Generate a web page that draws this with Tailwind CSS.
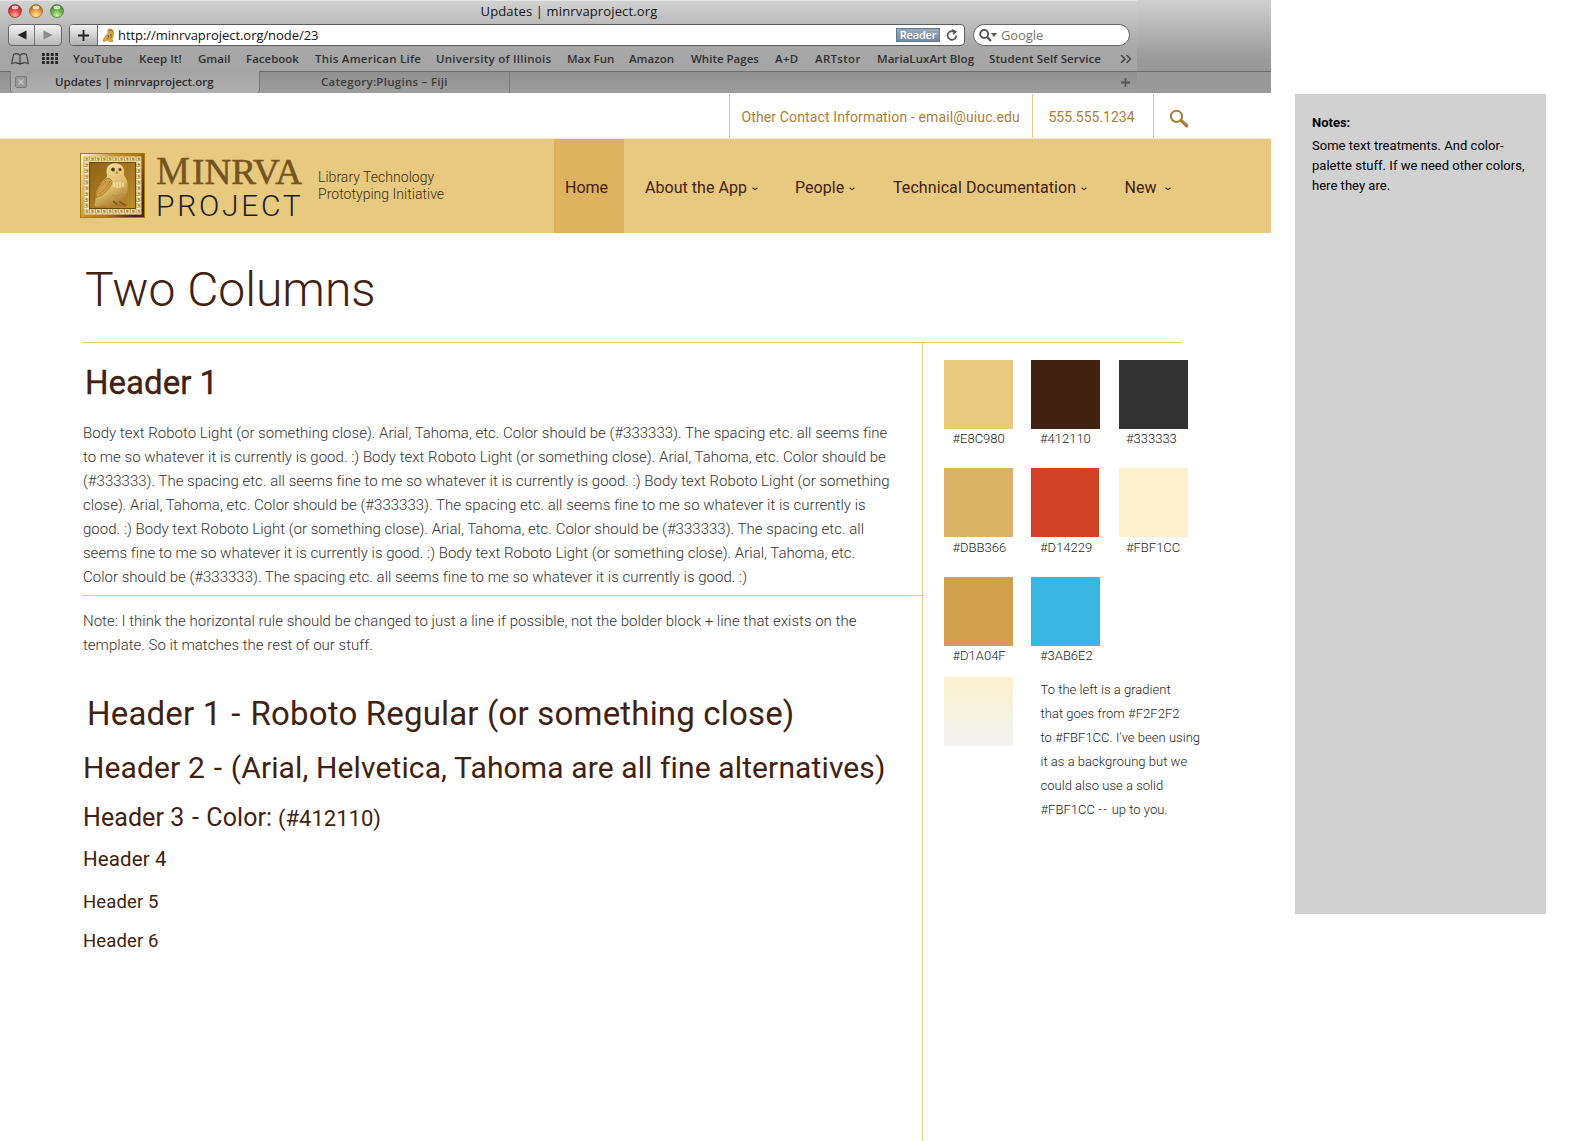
<!DOCTYPE html>
<html lang="en">
<head>
<meta charset="utf-8">
<title>Updates | minrvaproject.org</title>
<script src="https://cdn.jsdelivr.net/npm/@tailwindcss/browser@4"></script>
</head>
<body class="bg-white font-['Roboto',sans-serif]">
<div class="flex h-[1141px] w-[1569px] items-start overflow-hidden">
<div class="flex h-[1141px] w-[1271px] flex-col">

<!-- Browser chrome -->
<header class="flex h-[93px] bg-linear-to-b from-[#d0d0d0] via-[#999] via-65% to-[#999] font-['Open_Sans',sans-serif] text-[#2c2c2c]">
<div class="flex w-[1137px] flex-col bg-linear-to-b from-[#d2d2d2] via-[#a8a8a8] via-50% to-[#a2a2a2]">
  <div class="relative h-6 border-t border-[#e6e6e6] pl-px text-center text-[13px]/[21px] tracking-[0.14px] text-[#151515]">
    <div class="absolute top-[3px] left-2 flex gap-[7px]">
      <svg class="size-3.5" viewBox="0 0 14 14"><defs><radialGradient id="r" cx=".5" cy=".85" r=".8"><stop offset="0" stop-color="#ffb5b0"/><stop offset=".5" stop-color="#e84b4b"/><stop offset="1" stop-color="#a51d22"/></radialGradient></defs><circle cx="7" cy="7" r="6.5" fill="url(#r)" stroke="#8f3032" stroke-width=".7"/><ellipse cx="7" cy="3.4" rx="3.3" ry="1.9" fill="#fff" opacity=".75"/></svg>
      <svg class="size-3.5" viewBox="0 0 14 14"><defs><radialGradient id="y" cx=".5" cy=".85" r=".8"><stop offset="0" stop-color="#ffe9a4"/><stop offset=".5" stop-color="#eda043"/><stop offset="1" stop-color="#a8601a"/></radialGradient></defs><circle cx="7" cy="7" r="6.5" fill="url(#y)" stroke="#98622c" stroke-width=".7"/><ellipse cx="7" cy="3.4" rx="3.3" ry="1.9" fill="#fff" opacity=".75"/></svg>
      <svg class="size-3.5" viewBox="0 0 14 14"><defs><radialGradient id="g" cx=".5" cy=".85" r=".8"><stop offset="0" stop-color="#cdf5a4"/><stop offset=".5" stop-color="#72b750"/><stop offset="1" stop-color="#3b7a28"/></radialGradient></defs><circle cx="7" cy="7" r="6.5" fill="url(#g)" stroke="#48763a" stroke-width=".7"/><ellipse cx="7" cy="3.4" rx="3.3" ry="1.9" fill="#fff" opacity=".75"/></svg>
    </div>
    Updates | minrvaproject.org
  </div>
  <div class="flex h-[22px] pl-2">
    <div class="flex h-[22px] w-[54px] rounded border border-[#666] bg-linear-to-b from-[#f4f4f4] to-[#b8b8b8]">
      <div class="flex w-[26px] items-center justify-center border-r border-[#777]"><svg class="h-2.5 w-2.5" viewBox="0 0 10 10"><path d="M9.500 .5v9L.5 5z" fill="#222"/></svg></div>
      <div class="flex flex-1 items-center justify-center"><svg class="h-2.5 w-2.5" viewBox="0 0 10 10"><path d="M.5 .5v9L9.500 5z" fill="#8a8a8a"/></svg></div>
    </div>
    <div class="ml-[7px] flex h-[22px] w-[896px] overflow-hidden rounded border border-[#5c5c5c] bg-white">
      <div class="flex w-7 items-center justify-center border-r border-[#666] bg-linear-to-b from-[#f4f4f4] to-[#b0b0b0]"><svg class="size-[11px]" viewBox="0 0 11 11"><path d="M5.500 0v11M0 5.500h11" stroke="#222" stroke-width="1.800"/></svg></div>
      <svg class="mt-[3px] ml-1 h-[15px] w-[13px]" viewBox="0 0 13 15"><path d="M6.500.5C9 0 12 1.200 12 4c0 3 0 5-1.500 7l1 3H7l-1-1.500-4 1.500-1.500-1C1 9.500 3.500 7.500 5.500 5.500 5 3 5.200 1.200 6.500.5z" fill="#d3a344"/><path d="M7 2.500c1-1 3-.5 3.500 1M6 7c1 2 .5 3-1 4M9 6v4" stroke="#7d5418" fill="none"/></svg>
      <span class="ml-[3px] text-[13px]/[20px] tracking-[-0.05px] text-[#111]">http://minrvaproject.org/node/23</span>
      <span class="mt-[3px] ml-auto flex h-3.5 w-11 items-center justify-center border border-[#647688] bg-linear-to-b from-[#9aabbd] to-[#7488a0] text-[11px]/[12px] font-semibold tracking-[-0.2px] text-white">Reader</span>
      <svg class="mt-1 mr-[6px] ml-[6px] size-3" viewBox="0 0 12 12"><path d="M10.200 6.500A4.300 4.300 0 1 1 6 2.200h1.500" fill="none" stroke="#555" stroke-width="1.700"/><path d="M6 0l5 2.300L7.500 6z" fill="#555"/></svg>
    </div>
    <div class="ml-2 flex h-[22px] w-[157px] items-center rounded-full border border-[#666] bg-white pl-[5px] text-[13px]/[20px] text-[#777]">
      <svg class="h-[13px] w-[18px]" viewBox="0 0 18 13"><circle cx="5.200" cy="5" r="4" fill="none" stroke="#555" stroke-width="1.900"/><path d="M8 8l4 4" stroke="#555" stroke-width="2.300"/><path d="M12 4h6l-3 4z" fill="#555"/></svg>
      <span class="ml-1 tracking-[-0.1px]">Google</span>
    </div>
  </div>
  <nav class="flex h-[25px] text-[11.5px]/[25px] font-semibold whitespace-nowrap text-[#303030]">
    <svg class="mt-[7px] ml-[11px] h-3 w-[18px]" viewBox="0 0 18 12"><path d="M9 2.500C7.500.5 4.500.5 2.500 1.500L.7 10.500c2.300-1 6.300-1 8.300.7 2-1.700 6-1.700 8.300-.7l-1.800-9C13.500.5 10.500.5 9 2.500zM9 2.500v8.500" fill="none" stroke="#3a3a3a" stroke-width="1.100"/></svg>
    <svg class="mt-[7px] ml-[13px] h-[11px] w-4" viewBox="0 0 16 11"><path d="M0 1.500h16M0 5.500h16M0 9.500h16" stroke="#262626" stroke-width="3" stroke-dasharray="2.800 1.600"/></svg>
    <span class="ml-[15px] w-[66px] tracking-[0.15px]">YouTube</span>
    <span class="w-[59px] tracking-[0.1px]">Keep It!</span>
    <span class="w-12">Gmail</span>
    <span class="w-[69px]">Facebook</span>
    <span class="w-[121px] tracking-[0.24px]">This American Life</span>
    <span class="w-[131px] tracking-[0.26px]">University of Illinois</span>
    <span class="w-[62px]">Max Fun</span>
    <span class="w-[62px]">Amazon</span>
    <span class="w-[84px]">White Pages</span>
    <span class="w-10 tracking-[0.3px]">A+D</span>
    <span class="w-[62px] tracking-[0.3px]">ARTstor</span>
    <span class="w-28 tracking-[0.05px]">MariaLuxArt Blog</span>
    <span class="w-[131px] tracking-[0.12px]">Student Self Service</span>
    <svg class="mt-[9px] h-2 w-3" viewBox="0 0 12 8"><path d="M1 0l4 4-4 4M6.500 0l4 4-4 4" fill="none" stroke="#444" stroke-width="1.500"/></svg>
  </nav>
  <div class="flex h-[22px] bg-linear-to-b from-[#909090] to-[#9d9d9d] text-[11.5px]/[21px] font-semibold whitespace-nowrap shadow-[inset_0_1px_0_#6b6b6b]">
    <div class="ml-2.5 flex h-[22px] w-[250px] items-start rounded-b border-r border-l border-[#777] bg-linear-to-b from-[#a4a4a4] to-[#b0b0b0]">
      <svg class="mt-[5px] ml-1 size-3" viewBox="0 0 12 12"><rect x=".5" y=".5" width="11" height="11" rx="1.500" fill="#999" stroke="#7a7a7a"/><path d="M3.500 3.500l5 5m0-5l-5 5" stroke="#c9c9c9" stroke-width="1.300"/></svg>
      <span class="ml-7">Updates | minrvaproject.org</span>
    </div>
    <div class="flex h-[22px] w-[250px] border-r border-[#7c7c7c] pl-[61px] tracking-[0.28px] text-[#3b3b3b]">Category:Plugins – Fiji</div>
    <svg class="mt-[7px] mr-[7px] ml-auto size-[9px]" viewBox="0 0 9 9"><path d="M4.500 0v9M0 4.500h9" stroke="#555" stroke-width="1.800"/></svg>
  </div>
</div>
<div class="mt-[71px] h-px flex-1 bg-[#6b6b6b]"></div>
</header>

<!-- Contact strip -->
<div class="mt-px flex h-[45px] justify-end border-b border-[#f5e8dc] text-[14px]/[46px] whitespace-nowrap text-[#a97f37]">
  <div class="w-[303px] border-l border-[#e8c980] pl-[11.5px] tracking-[0.125px]">Other Contact Information - email@uiuc.edu</div>
  <div class="w-[121px] border-l border-[#e8c980] pl-[15.5px]">555.555.1234</div>
  <div class="w-[118px] border-l border-[#e8c980] pt-[15px] pl-4"><svg class="size-[19px]" viewBox="0 0 19 19"><circle cx="6.500" cy="7.300" r="5.600" fill="none" stroke="#a97f37" stroke-width="2"/><path d="M11.300 11.600l5.400 5.200" stroke="#a97f37" stroke-width="3.400" stroke-linecap="round"/></svg></div>
</div>

<!-- Masthead -->
<div class="flex h-[94px] bg-[#e8c980]">
  <svg class="mt-3.5 ml-20 size-[65px]" viewBox="0 0 65 65">
    <defs>
      <linearGradient id="fr" x1="0" y1=".1" x2="1" y2=".6"><stop offset="0" stop-color="#fff3cf"/><stop offset=".4" stop-color="#c4902a"/><stop offset=".7" stop-color="#a87417"/><stop offset="1" stop-color="#4a2800"/></linearGradient>
      <linearGradient id="bg" x1="0" y1="0" x2="1" y2="1"><stop offset="0" stop-color="#8f6413"/><stop offset="1" stop-color="#bd8d29"/></linearGradient>
      <linearGradient id="ow" x1=".3" y1="0" x2=".7" y2="1"><stop offset="0" stop-color="#f3dea0"/><stop offset=".55" stop-color="#e0bd6c"/><stop offset="1" stop-color="#a3732a"/></linearGradient>
      <pattern id="key" x="3.500" y="3.500" width="5.800" height="5.800" patternUnits="userSpaceOnUse"><path d="M0 5.200h5V.7H1.300v2.700h1.800" fill="none" stroke="#fff6da" stroke-width="1.100"/></pattern>
    </defs>
    <rect x=".5" y=".5" width="64" height="64" fill="url(#fr)" stroke="#a8780f"/>
    <rect x="6.400" y="6.400" width="52.200" height="52.200" fill="none" stroke="#ab7a1c" stroke-width="5.800"/>
    <rect x="6.400" y="6.400" width="52.200" height="52.200" fill="none" stroke="url(#key)" stroke-width="5.800"/>
    <rect x="9.500" y="9.500" width="46" height="46" fill="url(#bg)" stroke="#6d460a"/>
    <path d="M27 15c2-5 9-6 14-3 4 3 3 7 3 10 4 6 5 13 2 20-1 3-3 5-4 7l5 2-1 3-8-1-6 1c-4 1-6-2-10-1-3 1-8 1-8-1 2-3 1-4 2-8 0-8 4-14 11-20 0-3-1-6 0-9z" fill="url(#ow)"/>
    <path d="M26.500 25.500c-6 4-9 10-10.500 19 7-2 14-8 16-15 0-2-2-5-5.500-4z" fill="#cfa04b" stroke="#9c6c20" stroke-width=".7"/>
    <path d="M19 41c5-3 9-8 11-13M22 33l4-5" stroke="#a3742a" stroke-width=".7" fill="none"/>
    <path d="M34 29v5m3-5v6m3-6v6m3-5v4" stroke="#fbeab5" stroke-width="1.200"/>
    <path d="M32 42c3 2 7 1 10-2" stroke="#b58536" stroke-width=".8" fill="none"/>
    <circle cx="33" cy="16.500" r="1.900" fill="#5c390b"/><circle cx="40" cy="16.500" r="1.500" fill="#5c390b"/>
    <path d="M37 17l-1 3.500h1.800z" fill="#99691f"/>
    <path d="M33 48l4 3.500m2-3l6 3.500" stroke="#7a4e12" stroke-width="1.300"/>
  </svg>
  <div class="ml-3 w-[150px] pt-3.5">
    <div class="-ml-px flex h-8 font-['Liberation_Serif',serif] text-[#745420]">
      <svg class="h-8 w-9 overflow-visible" viewBox="0 0 36 32"><text x="0" y="31" textLength="34" lengthAdjust="spacingAndGlyphs" fill="currentColor" stroke="currentColor" stroke-width=".3" font-size="41">M</text></svg>
      <svg class="h-8 w-[110px] overflow-visible" viewBox="0 0 110 32"><text x="0" y="31" textLength="110" lengthAdjust="spacingAndGlyphs" fill="currentColor" stroke="currentColor" stroke-width=".5" font-size="35">INRVA</text></svg>
    </div>
    <div class="-ml-px mt-[2px] text-[30px]/[37px] font-light tracking-[2.7px] text-[#1c1c1c]">PROJECT</div>
  </div>
  <div class="ml-[11px] pt-[30px] text-[14px]/[17px] font-light tracking-[0.03px] whitespace-nowrap text-[#3a2c10]">Library Technology<br>Prototyping Initiative</div>
  <nav class="ml-auto flex text-[16px]/[98px] whitespace-nowrap text-[#412110]">
    <span class="h-[94px] w-[70px] bg-[#ddb35f] pl-[11px]">Home</span>
    <span class="flex h-[94px] w-[150px] pl-[21px] tracking-[0.04px]">About the App<svg class="mt-[48px] ml-[5px] h-1 w-[6px]" viewBox="0 0 6 4"><path d="M.5 1.200c1.500 0 1.500 1.300 2.500 1.300s1-1.300 2.500-1.300" fill="none" stroke="#412110" stroke-width="1.200"/></svg></span>
    <span class="flex h-[94px] w-[98px] pl-[21px] tracking-[0.06px]">People<svg class="mt-[48px] ml-[5px] h-1 w-[6px]" viewBox="0 0 6 4"><path d="M.5 1.200c1.500 0 1.500 1.300 2.500 1.300s1-1.300 2.500-1.300" fill="none" stroke="#412110" stroke-width="1.200"/></svg></span>
    <span class="flex h-[94px] w-[231px] pl-[21px] tracking-[0.08px]">Technical Documentation<svg class="mt-[48px] ml-[5px] h-1 w-[6px]" viewBox="0 0 6 4"><path d="M.5 1.200c1.500 0 1.500 1.300 2.500 1.300s1-1.300 2.500-1.300" fill="none" stroke="#412110" stroke-width="1.200"/></svg></span>
    <span class="flex h-[94px] w-[168px] pl-[21.5px]">New<svg class="mt-[48px] ml-[9px] h-1 w-[6px]" viewBox="0 0 6 4"><path d="M.5 1.200c1.500 0 1.500 1.300 2.500 1.300s1-1.300 2.500-1.300" fill="none" stroke="#412110" stroke-width="1.200"/></svg></span>
  </nav>
</div>

<!-- Page body -->
<main class="flex flex-1 flex-col pl-[82px] text-[#412110]">
  <h1 class="mt-[29px] pl-[3px] text-[48px]/[56px] font-light">Two Columns</h1>
  <div class="mt-6 h-px w-[1100px] bg-[#e8c980]"></div>
  <div class="flex flex-1">
    <section class="w-[840px] whitespace-nowrap">
      <h2 class="mt-5 pl-[3px] text-[33px]/[40px] tracking-[0.02px] [-webkit-text-stroke:0.35px_#412110]">Header 1</h2>
      <p class="mt-[18px] pl-px text-[15px]/[24px] font-light tracking-[0.014px] text-[#333]">
        Body text Roboto Light (or something close). Arial, Tahoma, etc. Color should be (#333333). The spacing etc. all seems fine<br>
        to me so whatever it is currently is good. :) Body text Roboto Light (or something close). Arial, Tahoma, etc. Color should be<br>
        (#333333). The spacing etc. all seems fine to me so whatever it is currently is good. :) Body text Roboto Light (or something<br>
        close). Arial, Tahoma, etc. Color should be (#333333). The spacing etc. all seems fine to me so whatever it is currently is<br>
        good. :) Body text Roboto Light (or something close). Arial, Tahoma, etc. Color should be (#333333). The spacing etc. all<br>
        seems fine to me so whatever it is currently is good. :) Body text Roboto Light (or something close). Arial, Tahoma, etc.<br>
        Color should be (#333333). The spacing etc. all seems fine to me so whatever it is currently is good. :)
      </p>
      <div class="mt-[6px] h-px bg-[#e8c980]"></div>
      <p class="mt-[13px] pl-px text-[15px]/[24px] font-light tracking-[0.014px] text-[#333]">
        Note: I think the horizontal rule should be changed to just a line if possible, not the bolder block + line that exists on the<br>
        template. So it matches the rest of our stuff.
      </p>
      <h1 class="mt-[37px] pl-[5px] text-[33px]/[40px] tracking-[0.18px]">Header 1 <span class="px-[1.5px]">-</span> Roboto Regular (or something close)</h1>
      <h2 class="mt-4 pl-px text-[30px]/[36px] tracking-[0.12px]">Header 2 <span class="px-[1.2px]">-</span> (Arial, Helvetica, Tahoma are all fine alternatives)</h2>
      <h3 class="mt-4 flex pl-px text-[25px]/[32px]"><span class="w-[195px] tracking-[0.08px]">Header 3 <span class="px-[1.2px]">-</span> Color:</span><span class="text-[22px]/[34px]">(#412110)</span></h3>
      <h4 class="mt-[9px] pl-px text-[20.5px]/[28px] tracking-[0.14px]">Header 4</h4>
      <h5 class="mt-[17px] pl-px text-[18.5px]/[24px] tracking-[0.12px]">Header 5</h5>
      <h6 class="mt-[15px] pl-px text-[18.5px]/[24px] tracking-[0.12px]">Header 6</h6>
    </section>
    <aside class="flex-1 border-l border-[#e8c980] pt-[17px] pl-[21px] text-[13px]/[19px] font-light text-[#222]">
      <div class="grid grid-cols-[87px_88px_69px]">
        <div class="h-[108px]"><div class="size-[69px] bg-[#e8c980]"></div><div class="pl-[8.5px]">#E8C980</div></div>
        <div class="h-[108px]"><div class="size-[69px] bg-[#412110]"></div><div class="pl-[9px]">#412110</div></div>
        <div class="h-[108px]"><div class="size-[69px] bg-[#333]"></div><div class="pl-[7px]">#333333</div></div>
        <div class="h-[109px]"><div class="size-[69px] bg-[#dbb366]"></div><div class="pt-px pl-[8.5px]">#DBB366</div></div>
        <div class="h-[109px]"><div class="h-[69px] w-[68px] bg-[#d14229]"></div><div class="pt-px pl-[9px]">#D14229</div></div>
        <div class="h-[109px]"><div class="size-[69px] bg-[#fbf1cc]"></div><div class="pt-px pl-[7px]">#FBF1CC</div></div>
        <div class="h-[100px]"><div class="size-[69px] bg-[#d1a04f]"></div><div class="pl-[8.5px]">#D1A04F</div></div>
        <div class="h-[100px]"><div class="size-[69px] bg-[#3ab6e2]"></div><div class="pl-[9px]">#3AB6E2</div></div>
      </div>
      <div class="flex">
        <div class="size-[69px] bg-linear-to-b from-[#fbf1cc] to-[#f2f2f2]"></div>
        <p class="mt-px ml-[27.5px] text-[13px]/[24px] tracking-[0.03px] whitespace-nowrap">
          To the left is a gradient<br>
          that goes from #F2F2F2<br>
          to #FBF1CC. I've been using<br>
          it as a backgroung but we<br>
          could also use a solid<br>
          #FBF1CC <span class="tracking-[1.4px]">--</span> up to you.
        </p>
      </div>
    </aside>
  </div>
</main>
</div>

<!-- Notes panel -->
<aside class="mt-[94px] ml-6 h-[820px] w-[251px] bg-[#d1d1d1] pt-[19px] pl-[17px] text-[13px]/[20px] whitespace-nowrap text-black">
  <h2 class="font-bold">Notes:</h2>
  <p class="mt-[3px] tracking-[0.03px]">Some text treatments. And color-<br>palette stuff. If we need other colors,<br>here they are.</p>
</aside>
</div>
</body>
</html>
